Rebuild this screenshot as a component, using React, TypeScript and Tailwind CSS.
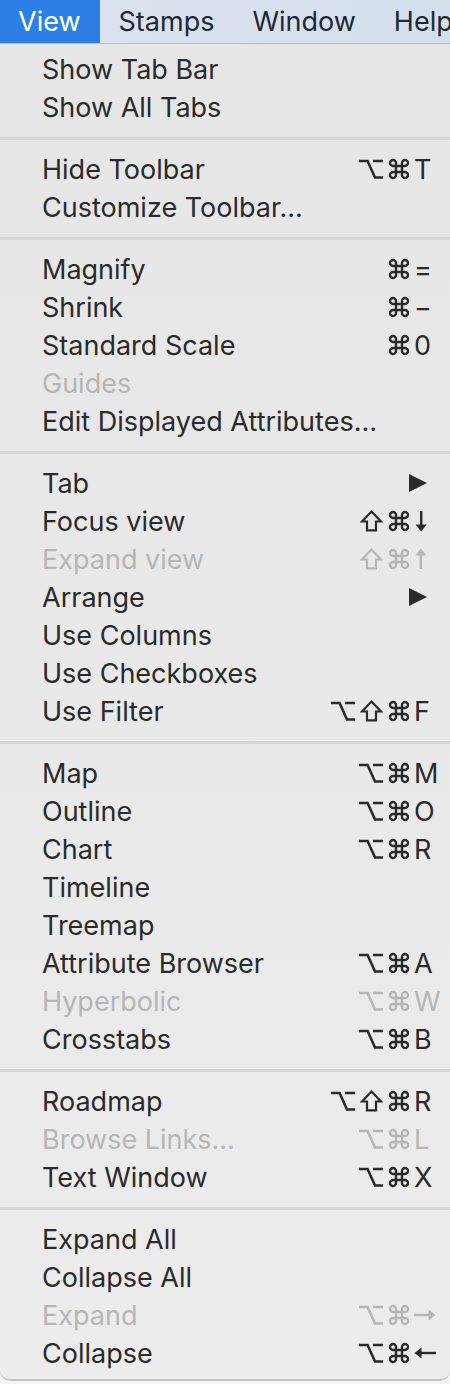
import React from 'react';

type Item = {
  label: string;
  mods?: string;
  k?: string;
  sub?: boolean;
  off?: boolean;
};

const sections: Item[][] = [
  [{ label: 'Show Tab Bar' }, { label: 'Show All Tabs' }],
  [{ label: 'Hide Toolbar', mods: '⌥⌘', k: 'T' }, { label: 'Customize Toolbar…' }],
  [
    { label: 'Magnify', mods: '⌘', k: '=' },
    { label: 'Shrink', mods: '⌘', k: '−' },
    { label: 'Standard Scale', mods: '⌘', k: '0' },
    { label: 'Guides', off: true },
    { label: 'Edit Displayed Attributes…' },
  ],
  [
    { label: 'Tab', sub: true },
    { label: 'Focus view', mods: '⇧⌘', k: 'down' },
    { label: 'Expand view', mods: '⇧⌘', k: 'up', off: true },
    { label: 'Arrange', sub: true },
    { label: 'Use Columns' },
    { label: 'Use Checkboxes' },
    { label: 'Use Filter', mods: '⌥⇧⌘', k: 'F' },
  ],
  [
    { label: 'Map', mods: '⌥⌘', k: 'M' },
    { label: 'Outline', mods: '⌥⌘', k: 'O' },
    { label: 'Chart', mods: '⌥⌘', k: 'R' },
    { label: 'Timeline' },
    { label: 'Treemap' },
    { label: 'Attribute Browser', mods: '⌥⌘', k: 'A' },
    { label: 'Hyperbolic', mods: '⌥⌘', k: 'W', off: true },
    { label: 'Crosstabs', mods: '⌥⌘', k: 'B' },
  ],
  [
    { label: 'Roadmap', mods: '⌥⇧⌘', k: 'R' },
    { label: 'Browse Links…', mods: '⌥⌘', k: 'L', off: true },
    { label: 'Text Window', mods: '⌥⌘', k: 'X' },
  ],
  [
    { label: 'Expand All' },
    { label: 'Collapse All' },
    { label: 'Expand', mods: '⌥⌘', k: 'right', off: true },
    { label: 'Collapse', mods: '⌥⌘', k: 'left' },
  ],
];

function Cmd() {
  return (
    <svg width="22" height="22" viewBox="0 0 22 22" fill="none" stroke="currentColor" strokeWidth="2.4">
      <path d="M8 8V5.2A3 3 0 1 0 5.2 8H16.8A3 3 0 1 0 14 5.2V16.8A3 3 0 1 0 16.8 14H5.2A3 3 0 1 0 8 16.8Z" />
    </svg>
  );
}

function Opt() {
  return (
    <svg width="24" height="22" viewBox="0 0 24 22" fill="none" stroke="currentColor" strokeWidth="2.6">
      <path d="M0 3H8.6L16 19.5H24M14 3H24" />
    </svg>
  );
}

function Shift() {
  return (
    <svg width="23" height="22" viewBox="0 0 23 22" fill="none" stroke="currentColor" strokeWidth="2.2" strokeLinejoin="miter">
      <path d="M11.5 1.6L21 11.5H16V20.4H7V11.5H2Z" />
    </svg>
  );
}

function Arrow({ dir }: { dir: string }) {
  if (dir === 'down' || dir === 'up') {
    return (
      <svg width="14" height="22" viewBox="0 0 14 22" fill="currentColor" className={dir === 'up' ? 'rotate-180' : ''}>
        <rect x="6" y="1" width="2.4" height="15" />
        <path d="M1.5 14.5H12.7L7.1 21.5Z" />
      </svg>
    );
  }
  return (
    <svg width="22" height="14" viewBox="0 0 22 14" fill="currentColor" className={dir === 'left' ? 'rotate-180' : ''}>
      <rect x="0" y="5.8" width="16" height="2.4" />
      <path d="M14.5 1.5V12.5L21.5 7Z" />
    </svg>
  );
}

function Shortcut({ mods, k }: { mods: string; k: string }) {
  return (
    <div className="flex items-center">
      <div className="flex items-center gap-[5px]">
        {mods.split('').map((m, i) =>
          m === '⌘' ? <Cmd key={i} /> : m === '⌥' ? <Opt key={i} /> : <Shift key={i} />
        )}
      </div>
      <div className="w-[26px] ml-[4px] flex items-center">
        {k.length > 1 ? <Arrow dir={k} /> : <span>{k}</span>}
      </div>
    </div>
  );
}

function Row({ item }: { item: Item }) {
  return (
    <div
      className={`h-[38px] flex items-center justify-between pl-[42px] pr-[10px] ${
        item.off ? 'text-[#b6b6b6]' : 'text-[#2a2a2a]'
      }`}
    >
      <span>{item.label}</span>
      {item.sub && (
        <svg width="18" height="18" viewBox="0 0 18 18" className="mr-[13px]" fill="currentColor">
          <path d="M0 0L18 9L0 18Z" />
        </svg>
      )}
      {item.mods && item.k && <Shortcut mods={item.mods} k={item.k} />}
    </div>
  );
}

export default function App() {
  return (
    <div className="w-[450px] h-[1384px] bg-[#f4f4f4] overflow-hidden font-['Inter','Liberation_Sans',sans-serif]">
      <div className="h-[44px] flex items-stretch bg-gradient-to-r from-[#dbe4ee] to-[#d3dfec] border-b border-[#b8bcc2] text-[27px] text-[#1e2733]">
        <div className="pl-[18px] pr-[19px] pt-[2px] flex items-center bg-[#2c7fe5] text-white">View</div>
        <div className="px-[19px] pt-[2px] flex items-center">Stamps</div>
        <div className="px-[19px] pt-[2px] flex items-center">Window</div>
        <div className="px-[19px] pt-[2px] flex items-center whitespace-nowrap">Help</div>
      </div>
      <div className="bg-gradient-to-b from-[#e6e6e6] to-[#ececec] rounded-b-[10px] border-b-2 border-[#c4c4c4] pt-[6px] pb-[7px] text-[27px] leading-none">
        {sections.map((sec, i) => (
          <div key={i}>
            {i > 0 && (
              <div className="h-[24px] flex items-center">
                <div className="h-[3px] w-full bg-[#d6d6d6]" />
              </div>
            )}
            {sec.map((it) => (
              <Row key={it.label} item={it} />
            ))}
          </div>
        ))}
      </div>
    </div>
  );
}
